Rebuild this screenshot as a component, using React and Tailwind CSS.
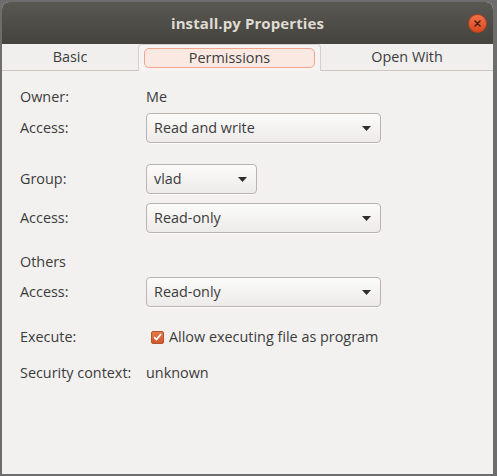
import React from 'react';

const font = { fontFamily: '"Open Sans", "DejaVu Sans", sans-serif' };

const Combo = ({ value, width }) => (
  <div
    className={`${width} h-[30px] flex items-center justify-between pl-[7px] pr-[9px] rounded-[4px] border border-[#bab4ae] bg-gradient-to-b from-[#fbfbfa] to-[#edebe9] shadow-[0_1px_0_rgba(255,255,255,0.8)]`}
  >
    <span className="text-[14.4px] text-[#3c3c3c]">{value}</span>
    <svg width="9" height="5" viewBox="0 0 9 5">
      <path d="M0 0 L9 0 L4.5 5 Z" fill="#2e2e2e" />
    </svg>
  </div>
);

const Row = ({ label, children, className = '' }) => (
  <div className={`flex items-center ${className}`}>
    <div className="w-[126px] shrink-0 text-[14.4px] text-[#3c3c3c]">{label}</div>
    {children}
  </div>
);

export default function App() {
  return (
    <div className="w-[497px] h-[476px] bg-[#6d6d6d] pt-[2px] pl-[2px]" style={font}>
      <div className="w-[491px] h-[472px] flex flex-col rounded-t-[7px] overflow-hidden bg-[#f2f1f0]">
        {/* Title bar */}
        <div className="h-[42px] relative flex items-center justify-center bg-gradient-to-b from-[#5a5852] to-[#45433d]">
          <span className="text-[15px] font-bold text-[#dfdbd2] tracking-[0.1px]">install.py Properties</span>
          <div className="absolute right-[6px] top-[12px] w-[19px] h-[19px] rounded-full bg-gradient-to-b from-[#f0714a] to-[#d9471c] border border-[#b8401a] flex items-center justify-center">
            <svg width="7" height="7" viewBox="0 0 7 7">
              <path d="M1 1 L6 6 M6 1 L1 6" stroke="#4a1d0e" strokeWidth="1.5" strokeLinecap="round" />
            </svg>
          </div>
        </div>

        {/* Tabs */}
        <div className="h-[27px] flex border-b border-[#cdc7c2] bg-[#f0efee]">
          <div className="w-[136px] flex items-center justify-center pb-px text-[14.4px] text-[#3c3c3c]">Basic</div>
          <div className="w-[183px] -mb-px flex items-stretch px-[5px] pt-[3px] pb-[3px] bg-[#f5f4f3] border-x border-t border-[#d5d0cc] rounded-t-[4px]">
            <div className="flex-1 flex items-center justify-center pb-px rounded-[5px] border border-[#f3a68a] bg-[#fae9e3] text-[14.4px] text-[#3c3c3c]">
              Permissions
            </div>
          </div>
          <div className="flex-1 flex items-center justify-center pb-px text-[14.4px] text-[#3c3c3c]">Open With</div>
        </div>

        {/* Content */}
        <div className="flex flex-col pl-[18px] pt-[16px]">
          <Row label="Owner:" className="h-[20px]">
            <span className="text-[14.4px] text-[#3c3c3c]">Me</span>
          </Row>
          <Row label="Access:" className="mt-[6px]">
            <Combo value="Read and write" width="w-[235px]" />
          </Row>
          <Row label="Group:" className="mt-[21px]">
            <Combo value="vlad" width="w-[111px]" />
          </Row>
          <Row label="Access:" className="mt-[9px]">
            <Combo value="Read-only" width="w-[235px]" />
          </Row>
          <div className="mt-[19px] h-[20px] flex items-center text-[14.4px] text-[#3c3c3c]">Others</div>
          <Row label="Access:" className="mt-[5px]">
            <Combo value="Read-only" width="w-[235px]" />
          </Row>
          <Row label="Execute:" className="mt-[20px] h-[20px]">
            <div className="flex items-center gap-[5px] pl-[5px]">
              <div className="w-[13px] h-[13px] rounded-[2px] bg-gradient-to-b from-[#e5784c] to-[#cf5a2c] border border-[#b5532b] flex items-center justify-center">
                <svg width="9" height="8" viewBox="0 0 9 8">
                  <path d="M1 4.2 L3.5 6.5 L8 1" stroke="#fff" strokeWidth="1.7" fill="none" />
                </svg>
              </div>
              <span className="text-[14.4px] text-[#3c3c3c]">Allow executing file as program</span>
            </div>
          </Row>
          <Row label="Security context:" className="mt-[16px] h-[20px]">
            <span className="text-[14.4px] text-[#3c3c3c]">unknown</span>
          </Row>
        </div>
      </div>
    </div>
  );
}
